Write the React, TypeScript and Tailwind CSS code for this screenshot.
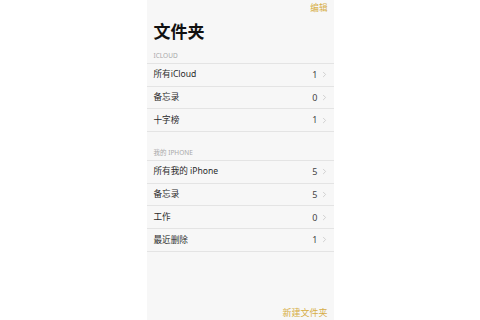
import { ChevronRight } from 'lucide-react'

type Folder = { name: string; count: number }

const icloud: Folder[] = [
  { name: '所有iCloud', count: 1 },
  { name: '备忘录', count: 0 },
  { name: '十字榜', count: 1 },
]

const iphone: Folder[] = [
  { name: '所有我的 iPhone', count: 5 },
  { name: '备忘录', count: 5 },
  { name: '工作', count: 0 },
  { name: '最近删除', count: 1 },
]

function Row({ folder }: { folder: Folder }) {
  return (
    <div className="h-[22.7px] flex items-center justify-between pl-[7px] pr-[5px] border-b border-[#e4e4e4]">
      <span className="text-[8.6px] text-[#2a2a2a]">{folder.name}</span>
      <span className="flex items-center gap-[2px]">
        <span className="text-[9px] text-[#444]">{folder.count}</span>
        <ChevronRight className="w-[9px] h-[9px] text-[#c4c4c4]" strokeWidth={2} />
      </span>
    </div>
  )
}

export default function App() {
  return (
    <div
      className="w-[480px] h-[320px] bg-white flex justify-center overflow-hidden"
      style={{ fontFamily: '"Noto Sans", "Noto Sans CJK SC", sans-serif' }}
    >
      <div className="w-[187px] h-[320px] bg-[#f7f7f7] flex flex-col">
        <div className="h-[16px] flex items-center justify-end pr-[6px]">
          <span className="text-[8.6px] text-[#d6ad45]">编辑</span>
        </div>
        <div className="h-[30px] flex items-center pl-[7px]">
          <span className="text-[17px] font-semibold text-[#111] leading-none">文件夹</span>
        </div>
        <div className="h-[18px] flex items-end pb-[4px] pl-[7px] border-b border-[#e4e4e4]">
          <span className="text-[6.5px] text-[#a8a8a8] leading-none">ICLOUD</span>
        </div>
        {icloud.map(f => (
          <Row key={'c' + f.name} folder={f} />
        ))}
        <div className="h-[29px] flex items-end pb-[4px] pl-[7px] border-b border-[#e4e4e4]">
          <span className="text-[6.5px] text-[#a8a8a8] leading-none">我的 IPHONE</span>
        </div>
        {iphone.map(f => (
          <Row key={'p' + f.name} folder={f} />
        ))}
        <div className="flex-1" />
        <div className="h-[14px] flex items-center justify-end pr-[6px]">
          <span className="text-[9px] text-[#d6ad45]">新建文件夹</span>
        </div>
      </div>
    </div>
  )
}
